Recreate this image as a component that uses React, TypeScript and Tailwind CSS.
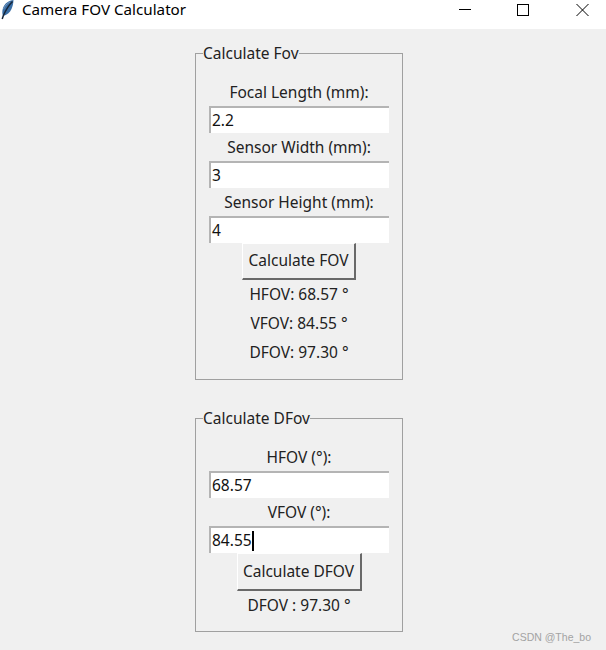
import React from 'react';

const Feather = () => (
    <svg width="14" height="20" viewBox="0 0 14 20" className="shrink-0 -mt-[9px]">
        <path d="M12.5 0C8 0.5 3.5 3.5 2 8C1 11 1.2 14 2 16C6 15 9 12.5 10.5 9C11.8 6.2 12.4 3.2 12.5 0Z" fill="#3a6ea5" />
        <path d="M11.5 1.5C8 5 4.8 10 2.4 15.5L1.2 19" fill="none" stroke="#16263a" strokeWidth="1.5" />
        <path d="M2.5 9C3.5 6 6 3.5 9 2" fill="none" stroke="#6f93bb" strokeWidth="1" />
    </svg>
);

const TitleBar = () => (
    <div className="h-[29px] bg-white flex items-center pl-[1px] text-[15.2px] text-black">
        <Feather />
        <span className="ml-[7px] flex-1 -mt-[10px]">Camera FOV Calculator</span>
        <div className="flex items-center pr-[17px] gap-[46px] -mt-[9px]">
            <svg width="13" height="12" viewBox="0 0 13 12"><path d="M1 5.5H13" stroke="#000" strokeWidth="1" /></svg>
            <svg width="13" height="12" viewBox="0 0 13 12"><rect x="0.5" y="0.5" width="11" height="11" fill="none" stroke="#000" strokeWidth="1" /></svg>
            <svg width="13" height="12" viewBox="0 0 13 12"><path d="M0.5 0L12.5 12M12.5 0L0.5 12" fill="none" stroke="#000" strokeWidth="1" /></svg>
        </div>
    </div>
);

const Label = ({ children }: { children: React.ReactNode }) => (
    <div className="h-[29px] flex items-center justify-center text-[#222] whitespace-nowrap">{children}</div>
);

const Entry = ({ value, caret }: { value: string; caret?: boolean }) => (
    <div className="-mt-[1px] h-[27px] w-[180px] bg-white border-t-2 border-l-2 border-[#b4b4b4] pl-[1px] flex items-center text-[#111]">
        <span>{value}</span>
        {caret && <span className="inline-block w-[2px] h-[20px] bg-black" />}
    </div>
);

const Button = ({ label, width, height }: { label: string; width: string; height: string }) => (
    <div className={`${width} ${height} bg-[#f0f0f0] border-t border-l border-t-white border-l-white border-r-2 border-b-2 border-r-[#696969] border-b-[#696969] flex items-center justify-center text-[#222]`}>
        {label}
    </div>
);

const Group = ({ title, className, children }: { title: string; className: string; children: React.ReactNode }) => (
    <fieldset className={`w-[208px] border border-[#a0a0a0] pl-[13px] ${className}`}>
        <legend className="-ml-[6px] h-[20px] leading-[20px] text-[#222] whitespace-nowrap">{title}</legend>
        <div className="w-[180px] pt-[15px] flex flex-col items-center">{children}</div>
    </fieldset>
);

export default function App() {
    return (
        <div className="relative w-[606px] h-[650px] overflow-hidden bg-[#f0f0f0] text-[15.5px] font-['Noto_Sans',sans-serif]">
            <TitleBar />
            <div className="pl-[195px] pt-[14px] flex flex-col gap-[28px]">
                <Group title="Calculate Fov" className="pb-[12px]">
                    <Label>Focal Length (mm):</Label>
                    <Entry value="2.2" />
                    <Label>Sensor Width (mm):</Label>
                    <Entry value="3" />
                    <Label>Sensor Height (mm):</Label>
                    <Entry value="4" />
                    <Button label="Calculate FOV" width="w-[114px]" height="h-[37px]" />
                    <Label>HFOV: 68.57 °</Label>
                    <Label>VFOV: 84.55 °</Label>
                    <Label>DFOV: 97.30 °</Label>
                </Group>
                <Group title="Calculate DFov" className="pb-[11px]">
                    <Label>HFOV (°):</Label>
                    <Entry value="68.57" />
                    <Label>VFOV (°):</Label>
                    <Entry value="84.55" caret />
                    <Button label="Calculate DFOV" width="w-[125px]" height="h-[38px]" />
                    <Label>DFOV : 97.30 °</Label>
                </Group>
            </div>
            <div className="absolute right-[15px] bottom-[8px] text-[10.5px] leading-none text-[#a3a3a3] font-['Liberation_Sans',sans-serif]">CSDN @The_bo</div>
        </div>
    );
}
